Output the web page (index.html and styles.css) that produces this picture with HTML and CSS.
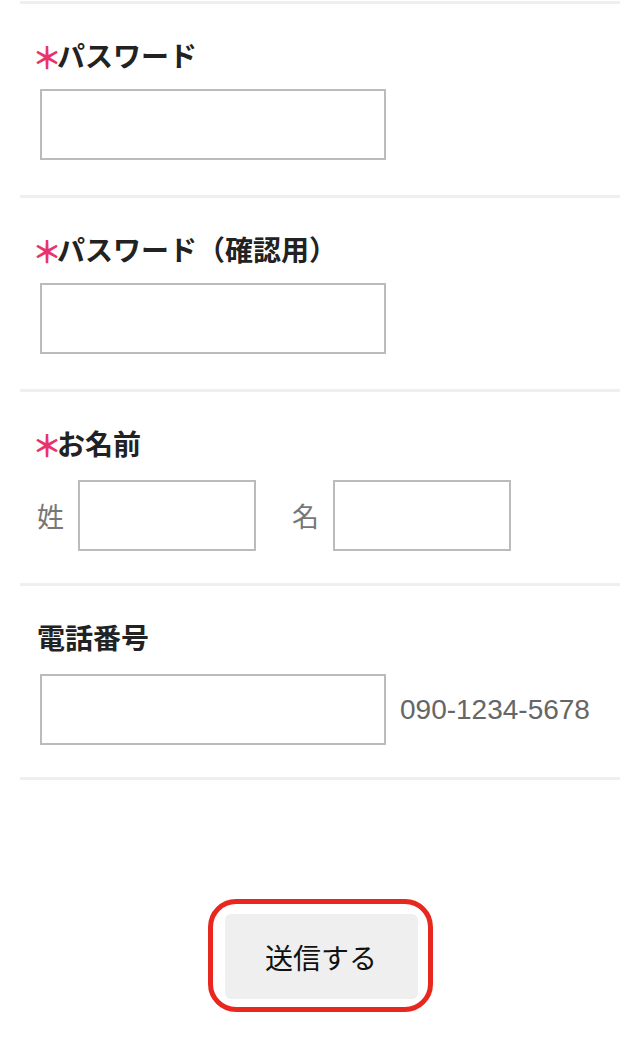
FILE: index.html
```html
<!DOCTYPE html>
<html lang="ja">
<head>
    <meta charset="UTF-8">
    <meta name="viewport" content="width=device-width, initial-scale=1.0">
    <title>会員登録</title>
    <link rel="stylesheet" href="styles.css">
</head>
<body>

    <!-- 入力フォーム -->
    <form class="form" onsubmit="return false;">

        <div class="field">
            <label class="field-label"><span class="req">＊</span>パスワード</label>
            <input type="password" class="text-input">
        </div>

        <div class="field">
            <label class="field-label"><span class="req">＊</span>パスワード（確認用）</label>
            <input type="password" class="text-input">
        </div>

        <div class="field field--row">
            <label class="field-label"><span class="req">＊</span>お名前</label>
            <div class="name-row">
                <span class="sub-label">姓</span>
                <input type="text" class="text-input text-input--short">
                <span class="sub-label sub-label--second">名</span>
                <input type="text" class="text-input text-input--short">
            </div>
        </div>

        <div class="field field--row">
            <label class="field-label">電話番号</label>
            <div class="tel-row">
                <input type="tel" class="text-input">
                <span class="hint">090-1234-5678</span>
            </div>
        </div>

        <!-- 送信ボタン -->
        <div class="actions">
            <div class="highlight">
                <button type="submit" class="submit">送信する</button>
            </div>
        </div>
    </form>

</body>
</html>
```

FILE: styles.css
```css
/* ページ全体 */
body {
    margin: 0;
    padding-top: 1px;
    background-color: #fff;
    font-family: "Noto Sans CJK JP", "Noto Sans", sans-serif;
    color: #222;
}

/* フォーム */
.form {
    margin: 0 20px;
    border-top: 3px solid #efefef;
}

.field {
    padding: 31px 0 35px 17px;
    border-bottom: 3px solid #efefef;
}

.field--row {
    padding-bottom: 32px;
}

.field-label {
    display: block;
    height: 40px;
    font-size: 28px;
    line-height: 40px;
    font-weight: bold;
    margin-bottom: 14px;
}

.field--row .field-label {
    margin-bottom: 17px;
}

.req {
    display: inline-block;
    line-height: 0;
    margin-left: -5px;
    color: #e8336b;
    font-size: 30px;
    font-weight: bold;
    letter-spacing: -5px;
    position: relative;
    top: 2px;
}

/* テキスト入力 */
.text-input {
    display: block;
    box-sizing: border-box;
    width: 346px;
    height: 71px;
    margin: 0 0 0 3px;
    border: 2px solid #bbb;
    border-radius: 0;
    background-color: #fff;
    font-size: 24px;
    padding: 0 10px;
}

.text-input--short {
    width: 178px;
    margin: 0;
}

/* お名前 */
.name-row {
    display: flex;
    align-items: center;
}

.sub-label {
    font-size: 27px;
    color: #777;
    margin-right: 14px;
}

.sub-label--second {
    margin-left: 36px;
}

/* 電話番号 */
.tel-row {
    display: flex;
    align-items: center;
}

.hint {
    margin-left: 14px;
    font-family: "Liberation Sans", Arial, sans-serif;
    font-size: 28px;
    color: #666;
}

/* 送信ボタン */
.actions {
    padding-top: 119px;
    text-align: center;
}

.highlight {
    display: inline-block;
    padding: 10px 10px 8px 12px;
    border: 5px solid #e8281e;
    border-radius: 28px;
}

.submit {
    display: block;
    width: 193px;
    height: 85px;
    border: none;
    border-radius: 6px;
    background-color: #efefef;
    color: #111;
    font-family: "Noto Sans CJK JP", sans-serif;
    font-size: 28px;
    cursor: pointer;
}
```
